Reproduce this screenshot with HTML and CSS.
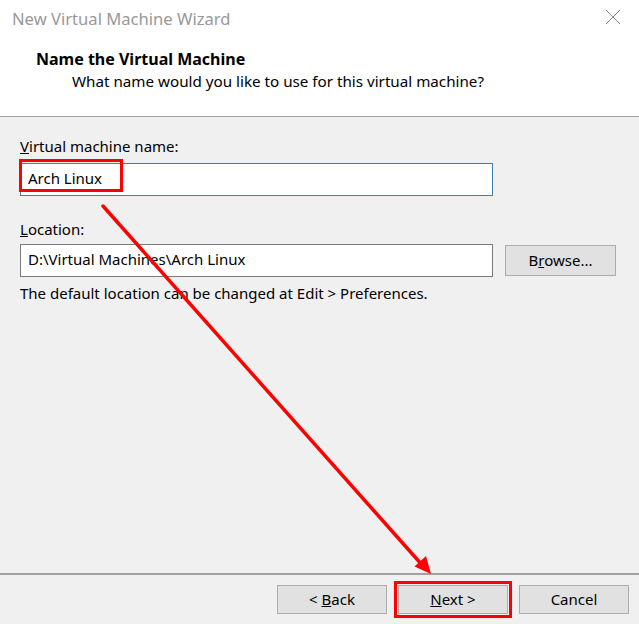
FILE: index.html
```html
<!DOCTYPE html>
<html>
<head>
<meta charset="utf-8">
<link rel="stylesheet" href="styles.css">
</head>
<body>
<div class="window">
  <div class="titlebar">
    <span class="title">New Virtual Machine Wizard</span>
    <svg class="close" width="16" height="16" viewBox="0 0 16 16"><path d="M1 1 L15 15 M15 1 L1 15" stroke="#8a8a8a" stroke-width="1" fill="none"/></svg>
  </div>
  <div class="header">
    <div class="h-title">Name the Virtual Machine</div>
    <div class="h-sub">What name would you like to use for this virtual machine?</div>
  </div>
  <div class="content">
    <div class="label label-name"><u>V</u>irtual machine name:</div>
    <div class="field-row">
      <div class="input focused">Arch Linux</div>
      <div class="mark mark-name"></div>
    </div>
    <div class="label label-loc"><u>L</u>ocation:</div>
    <div class="field-row">
      <div class="input">D:\Virtual Machines\Arch Linux</div>
      <div class="btn browse">B<u>r</u>owse...</div>
    </div>
    <div class="hint">The default location can be changed at Edit &gt; Preferences.</div>
  </div>
  <div class="footer">
    <div class="btn">&lt; <u>B</u>ack</div>
    <div class="btn next"><u>N</u>ext &gt;</div>
    <div class="btn">Cancel</div>
  </div>
  <svg class="arrow" width="639" height="624" viewBox="0 0 639 624">
    <line x1="103" y1="206" x2="423" y2="566" stroke="#ff0000" stroke-width="3.5" stroke-linecap="round"/>
    <polygon points="431,574 414.5,566.5 426,556" fill="#ff0000"/>
  </svg>
</div>
</body>
</html>
```

FILE: styles.css
```css
* { box-sizing: border-box; }
html, body { margin: 0; padding: 0; }
body {
  font-family: "Noto Sans", "Open Sans", sans-serif;
  font-size: 15px;
  color: #000;
}
.window {
  position: relative;
  width: 639px;
  height: 624px;
  background: #f0f0f0;
  display: flex;
  flex-direction: column;
  overflow: hidden;
}
.titlebar {
  height: 36px;
  background: #fff;
  display: flex;
  align-items: center;
  justify-content: space-between;
  padding: 0 18px 0 12px;
}
.title {
  font-size: 16.6px;
  color: #999;
}
.close { display: block; margin-top: -2px; }
.header {
  background: #fff;
  height: 81px;
  border-bottom: 1px solid #a0a0a0;
  padding: 12px 0 0 36px;
}
.h-title {
  font-weight: bold;
  font-size: 16px;
  line-height: 22px;
}
.h-sub {
  padding-left: 36px;
  line-height: 23px;
  font-size: 15.2px;
}
.content {
  flex: 1;
  padding: 18px 23px 0 20px;
}
.label { line-height: 22px; height: 24px; }
.label-name { height: 28px; }
.label-loc { margin-top: 22px; height: 26px; }
.field-row {
  position: relative;
  display: flex;
  align-items: center;
  gap: 12px;
}
.input {
  width: 473px;
  height: 33px;
  background: #fff;
  border: 1px solid #7a7a7a;
  padding: 0 7px;
  line-height: 28px;
}
.input.focused { border-color: #3c7fb1; }
.mark {
  position: absolute;
  border: 3px solid #ff0000;
}
.mark-name {
  left: -1px;
  top: -4px;
  width: 104px;
  height: 33px;
}
.btn {
  width: 111px;
  height: 31px;
  border: 1px solid #adadad;
  background: #e1e1e1;
  text-align: center;
  line-height: 28px;
}
.hint { margin-top: 5px; line-height: 22px; }
.footer {
  height: 51px;
  border-top: 2px solid #a0a0a0;
  display: flex;
  justify-content: flex-end;
  align-items: flex-start;
  gap: 11px;
  padding: 10px 10px 0 0;
}
.footer .btn { width: 110px; height: 29px; line-height: 27px; }
.next {
  outline: 3px solid #ff0000;
  outline-offset: 1px;
}
.arrow {
  position: absolute;
  left: 0;
  top: 0;
  pointer-events: none;
}
```
